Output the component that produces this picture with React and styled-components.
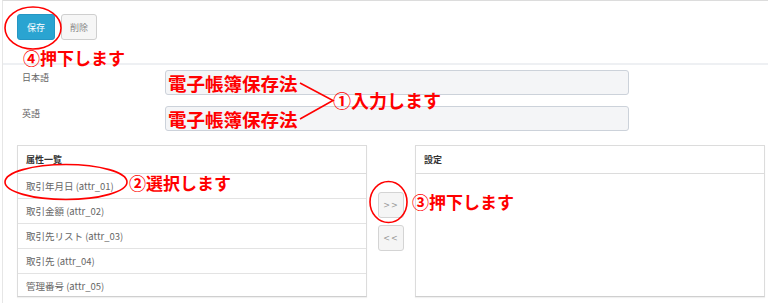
import React from "react";
import styled, { createGlobalStyle } from "styled-components";

const GlobalStyle = createGlobalStyle`
  html, body {
    margin: 0;
    padding: 0;
    background: #fff;
  }
  body {
    font-family: "Noto Sans CJK JP", "Noto Sans", sans-serif;
  }
`;

const Page = styled.div`
  position: relative;
  width: 766px;
  height: 302px;
  margin-left: 2px;
  border-top: 1px solid #dcdcdc;
  border-left: 1px solid #e6e6e6;
  overflow: hidden;
`;

const Toolbar = styled.div`
  display: flex;
  gap: 6px;
  height: 49px;
  padding: 13px 0 0 14px;
  border-bottom: 2px solid #eef0f3;
`;

const Button = styled.button`
  height: 26px;
  padding: 0 ${(p) => (p.$primary ? "9px" : "8px")};
  border-radius: 3px;
  border: 1px solid ${(p) => (p.$primary ? "#2596c4" : "#cfcfcf")};
  background: ${(p) => (p.$primary ? "#2aa4d1" : "#f6f6f6")};
  color: ${(p) => (p.$primary ? "#fff" : "#888")};
  font-family: inherit;
  font-size: 9px;
  line-height: 1;
  cursor: pointer;
`;

const Form = styled.div`
  display: flex;
  flex-direction: column;
  gap: 11px;
  padding: 5px 0 0 19px;
`;

const Row = styled.div`
  display: flex;
  align-items: flex-start;
`;

const Label = styled.div`
  width: 143px;
  padding-top: 1px;
  font-size: 9px;
  color: #666;
`;

const TextInput = styled.input`
  box-sizing: border-box;
  width: 464px;
  height: 25px;
  padding: 1px 2px 0;
  border: 1px solid #ccd2da;
  border-radius: 3px;
  background: #f4f5f7;
  color: #ff0000;
  font-family: inherit;
  font-size: 18.5px;
  font-weight: 700;
  outline: none;
`;

const Lists = styled.div`
  display: flex;
  padding: 14px 0 0 14px;
`;

const Panel = styled.div`
  box-sizing: border-box;
  width: ${(p) => p.$width}px;
  height: 152px;
  border: 1px solid #dcdcdc;
  border-bottom-color: #cfcfcf;
  box-shadow: 0 1px 1px rgba(0, 0, 0, 0.06);
  background: #fff;
`;

const PanelHeader = styled.div`
  display: flex;
  align-items: center;
  height: 28px;
  padding-left: 8px;
  box-sizing: border-box;
  border-bottom: 1px solid #dcdcdc;
  font-size: 9px;
  font-weight: 700;
  color: #333;
`;

const Item = styled.div`
  display: flex;
  align-items: center;
  height: 24px;
  padding-left: 8px;
  font-size: 9.5px;
  color: #666;
  & + & {
    border-top: 1px solid #e3e3e3;
  }
`;

const Mover = styled.div`
  display: flex;
  flex-direction: column;
  align-items: center;
  gap: 7px;
  width: 48px;
  padding-top: 47px;
`;

const MoveButton = styled.button`
  width: 26px;
  height: 26px;
  padding: 0;
  border: 1px solid #d4d4d4;
  border-radius: 3px;
  background: #f5f5f5;
  color: #999;
  font-family: "DejaVu Sans", sans-serif;
  font-size: 8px;
  letter-spacing: 1px;
`;

const Overlay = styled.svg`
  position: absolute;
  left: -3px;
  top: -1px;
  pointer-events: none;
`;

const Note = styled.div`
  position: absolute;
  left: ${(p) => p.$x - 3}px;
  top: ${(p) => p.$y - 1}px;
  font-size: ${(p) => p.$size || 17}px;
  font-weight: 700;
  line-height: 1;
  color: #ff0000;
  white-space: nowrap;
  pointer-events: none;
`;

const attributes = [
  "取引年月日 (attr_01)",
  "取引金額 (attr_02)",
  "取引先リスト (attr_03)",
  "取引先 (attr_04)",
  "管理番号 (attr_05)",
];

export default function App() {
  return (
    <>
      <GlobalStyle />
      <Page>
        <Toolbar>
          <Button $primary>保存</Button>
          <Button>削除</Button>
        </Toolbar>
        <Form>
          <Row>
            <Label>日本語</Label>
            <TextInput readOnly defaultValue="電子帳簿保存法" />
          </Row>
          <Row>
            <Label>英語</Label>
            <TextInput readOnly defaultValue="電子帳簿保存法" />
          </Row>
        </Form>
        <Lists>
          <Panel $width={350}>
            <PanelHeader>属性一覧</PanelHeader>
            {attributes.map((a) => (
              <Item key={a}>{a}</Item>
            ))}
          </Panel>
          <Mover>
            <MoveButton>&gt;&gt;</MoveButton>
            <MoveButton>&lt;&lt;</MoveButton>
          </Mover>
          <Panel $width={350}>
            <PanelHeader>設定</PanelHeader>
          </Panel>
        </Lists>

        <Overlay width="768" height="303" viewBox="0 0 768 303">
          <g fill="none" stroke="#ff0000" strokeWidth="1.6">
            <ellipse cx="33" cy="28" rx="28" ry="21" />
            <ellipse cx="66" cy="182" rx="61" ry="17.5" />
            <ellipse cx="388.5" cy="202" rx="18.5" ry="20.5" />
            <polyline points="300,83 333,100.5 300,119" />
          </g>
        </Overlay>
        <Note $x={23} $y={49}>④押下します</Note>
        <Note $x={333} $y={91} $size={18}>①入力します</Note>
        <Note $x={129} $y={174}>②選択します</Note>
        <Note $x={412} $y={193}>③押下します</Note>
      </Page>
    </>
  );
}
